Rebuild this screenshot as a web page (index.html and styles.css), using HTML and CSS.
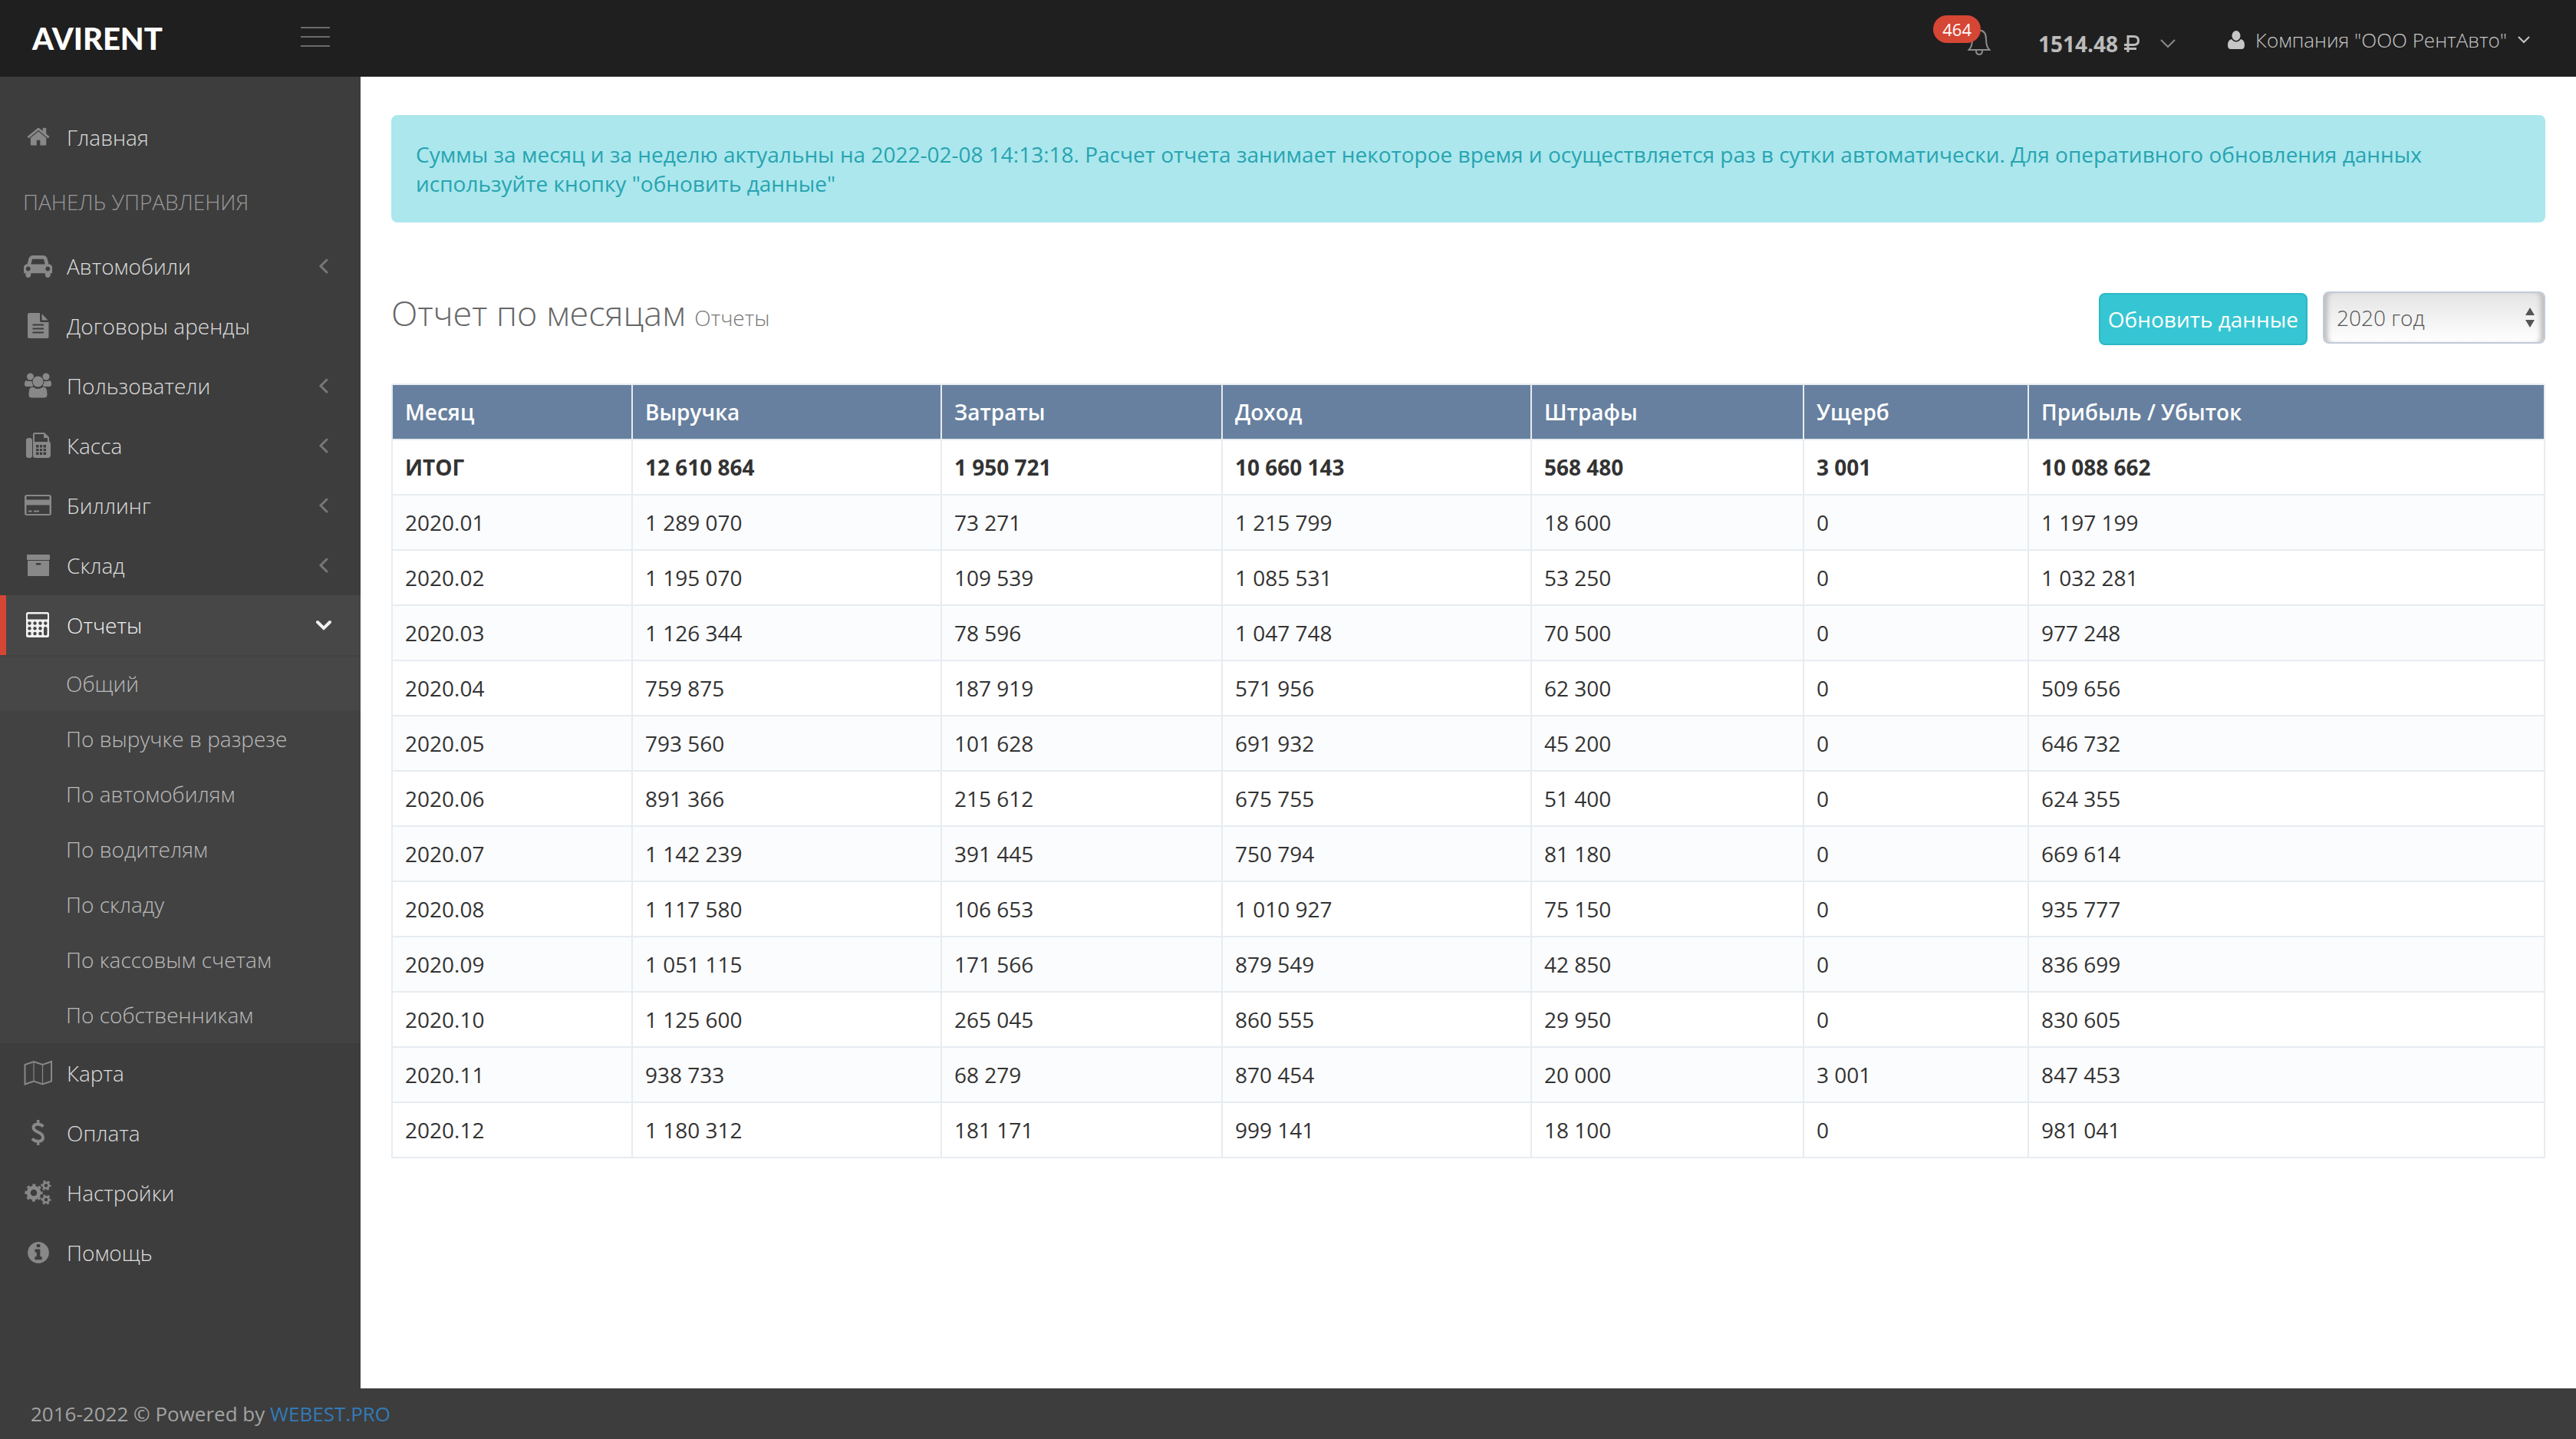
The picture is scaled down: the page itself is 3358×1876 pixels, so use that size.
FILE: index.html
```html
<!DOCTYPE html>
<html lang="ru">
<head>
<meta charset="utf-8">
<meta name="viewport" content="width=device-width, initial-scale=1">
<title>Отчет по месяцам</title>
<link rel="stylesheet" href="styles.css">
</head>
<body>
<header class="topbar">
  <div class="brand">
    <a class="logo" href="#">AVIRENT</a>
    <button class="toggler" type="button" aria-label="Меню"><span></span><span></span><span></span></button>
  </div>
  <div class="tools">
    <a class="bell" href="#" aria-label="Уведомления">
      <svg width="30" height="36" viewBox="0 0 30 36" fill="none" stroke="#8a8a8a" stroke-width="2"><path d="M1.500 28C5 25 6 21 6 14C6 6 9 2.500 15 2.500S24 6 24 14C24 21 25 25 28.500 28ZM11 29Q11 34 15 34T19 29"/></svg>
      <span class="badge">464</span>
    </a>
    <button class="balance" type="button">
      <b>1514.48</b>
      <svg class="rub" width="22" height="22" viewBox="0 0 22 22" fill="none" stroke="currentColor" stroke-width="3"><path d="M6 22V1.500H13.500Q19.500 1.500 19.500 7T13.500 12.500H1M1 17.500H17"/></svg>
      <svg class="arrow" width="20" height="12" viewBox="0 0 20 12" fill="none" stroke="#8a8a8a" stroke-width="2"><path d="M1 1L10 10L19 1"/></svg>
    </button>
    <button class="account" type="button">
      <svg width="22" height="24" viewBox="0 0 22 24" fill="currentColor"><ellipse cx="11" cy="6.500" rx="5.500" ry="6.500"/><path d="M5 11Q0 12 0 19Q0 24 4 24H18Q22 24 22 19Q22 12 17 11Q14.500 14.500 11 14.500T5 11Z"/></svg>
      <span>Компания "ООО РентАвто"</span>
      <svg width="16" height="10" viewBox="0 0 16 10" fill="none" stroke="currentColor" stroke-width="2"><path d="M1 1L8 8L15 1"/></svg>
    </button>
  </div>
</header>

<div class="shell">
  <nav class="sidebar">
    <ul class="menu">
      <li><a class="item" href="#">
        <svg class="ico" viewBox="0 0 38 38"><path transform="translate(4.200 2.300) scale(.0177)" d="M1472 992v480q0 26-19 45t-45 19h-384v-384h-256v384h-384q-26 0-45-19t-19-45v-480q0-1 .5-3t.5-3l575-474 575 474q1 2 1 6zm223-69l-62 74q-8 9-21 11h-3q-13 0-21-7l-692-577-692 577q-12 8-24 7-13-2-21-11l-62-74q-8-10-7-23.500t11-21.500l719-599q32-26 76-26t76 26l244 204v-195q0-14 9-23t23-9h192q14 0 23 9t9 23v408l219 182q10 8 11 21.500t-7 23.500z"/></svg>
        <span>Главная</span></a></li>
      <li class="heading">ПАНЕЛЬ УПРАВЛЕНИЯ</li>
      <li><a class="item" href="#">
        <svg class="ico" viewBox="0 0 38 38"><path transform="translate(1 2.700) scale(.0181)" d="M480 1088q0-66-47-113t-113-47-113 47-47 113 47 113 113 47 113-47 47-113zm36-320h1016l-89-357q-2-8-14-17.500t-21-9.500h-768q-9 0-21 9.500t-14 17.500zm1372 320q0-66-47-113t-113-47-113 47-47 113 47 113 113 47 113-47 47-113zm160-96v384q0 14-9 23t-23 9h-96v128q0 80-56 136t-136 56-136-56-56-136v-128h-1024v128q0 80-56 136t-136 56-136-56-56-136v-128h-96q-14 0-23-9t-9-23v-384q0-93 65.500-158.500t158.500-65.500h28l105-419q23-94 104-157.500t179-63.500h768q98 0 179 63.500t104 157.500l105 419h28q93 0 158.500 65.500t65.500 158.500z"/></svg>
        <span>Автомобили</span><svg class="chev" viewBox="0 0 20 20"><path d="M14 2L6 10L14 18"/></svg></a></li>
      <li><a class="item" href="#">
        <svg class="ico" viewBox="0 0 38 38"><path fill-rule="evenodd" d="M8 2H22V12Q22 14 24 14H33.500V33Q33.500 35 31.500 35H8Q6 35 6 33V4Q6 2 8 2ZM12.500 16.500V18.500H27V16.500ZM12.500 21.500V23.500H27V21.500ZM12.500 26.500V28.500H27V26.500Z"/><path d="M24.500 3L32.500 11.500H24.500Z"/></svg>
        <span>Договоры аренды</span></a></li>
      <li><a class="item" href="#">
        <svg class="ico" viewBox="0 0 38 38"><circle cx="9.500" cy="7" r="4.500"/><circle cx="30" cy="7" r="4.500"/><path d="M4 12Q6 13 9.500 13H13V20H5Q2 20 2 17Q2 13 4 12ZM35 12Q33 13 30 13H26V20H34Q37 20 37 17Q37 13 35 12Z"/><g class="cutout"><path d="M13 20Q16 22.500 19.500 22.500T26 20Q32 20 32 29V31Q32 35 28 35H11Q7 35 7 31V29Q7 20 13 20Z"/><circle cx="19.500" cy="13.500" r="7.500"/></g></svg>
        <span>Пользователи</span><svg class="chev" viewBox="0 0 20 20"><path d="M14 2L6 10L14 18"/></svg></a></li>
      <li><a class="item" href="#">
        <svg class="ico" viewBox="0 0 38 38"><rect x="4" y="9" width="8" height="26" rx="3"/><path fill-rule="evenodd" d="M15 2H28L34 8V13Q36 14 36 17V31Q36 35 32 35H16Q13 35 13 32V4Q13 2 15 2ZM15 4V14H32V9H27V4ZM17 18V21.500H20.500V18ZM22 18V21.500H25V18ZM26.500 18V21.500H30V18ZM17 23V26H20.500V23ZM22 23V26H25V23ZM26.500 23V26H30V23ZM17 27.500V31H20.500V27.500ZM22 27.500V31H25V27.500ZM26.500 27.500V31H30V27.500Z"/></svg>
        <span>Касса</span><svg class="chev" viewBox="0 0 20 20"><path d="M14 2L6 10L14 18"/></svg></a></li>
      <li><a class="item" href="#">
        <svg class="ico" viewBox="0 0 38 38"><path fill-rule="evenodd" d="M5 5H34Q37 5 37 8V29Q37 32 34 32H5Q2 32 2 29V8Q2 5 5 5ZM5 7Q4.500 7 4.500 7.500V11.500H34.500V7.500Q34.500 7 34 7ZM4.500 18.500V29.500Q4.500 30 5 30H34Q34.500 30 34.500 29.500V18.500ZM7 25.500H11.500V27.500H7ZM14 25.500H21V27.500H14Z"/></svg>
        <span>Биллинг</span><svg class="chev" viewBox="0 0 20 20"><path d="M14 2L6 10L14 18"/></svg></a></li>
      <li><a class="item" href="#">
        <svg class="ico" viewBox="0 0 38 38"><rect x="5" y="5" width="30" height="7" rx="1"/><path fill-rule="evenodd" d="M6 13H34V32Q34 33 33 33H7Q6 33 6 32ZM18 16Q16.500 16 16.500 17.200T18 18.500H22Q23.500 18.500 23.500 17.200T22 16Z"/></svg>
        <span>Склад</span><svg class="chev" viewBox="0 0 20 20"><path d="M14 2L6 10L14 18"/></svg></a></li>
      <li><a class="item active" href="#">
        <svg class="ico" viewBox="0 0 38 38"><rect x="4" y="2" width="30" height="33" rx="2.500"/><g class="holes"><rect x="6" y="4.500" width="26" height="7" rx="1"/><circle cx="8.500" cy="16.500" r="2.200"/><circle cx="15.500" cy="16.500" r="2.200"/><circle cx="22.500" cy="16.500" r="2.200"/><circle cx="29.300" cy="16.500" r="2.200"/><circle cx="8.500" cy="23.300" r="2.200"/><circle cx="15.500" cy="23.300" r="2.200"/><circle cx="22.500" cy="23.300" r="2.200"/><circle cx="8.500" cy="30" r="2.200"/><circle cx="15.500" cy="30" r="2.200"/><circle cx="22.500" cy="30" r="2.200"/><rect x="27" y="21" width="4.500" height="11.500" rx="2.200"/></g></svg>
        <span>Отчеты</span><svg class="chev" viewBox="0 0 20 20"><path d="M2 6L10 14L18 6"/></svg></a>
        <ul class="submenu">
          <li><a class="current" href="#">Общий</a></li>
          <li><a href="#">По выручке в разрезе</a></li>
          <li><a href="#">По автомобилям</a></li>
          <li><a href="#">По водителям</a></li>
          <li><a href="#">По складу</a></li>
          <li><a href="#">По кассовым счетам</a></li>
          <li><a href="#">По собственникам</a></li>
        </ul></li>
      <li><a class="item" href="#">
        <svg class="ico line" viewBox="0 0 38 38"><path d="M2.500 8L14 4L25.500 8L37 4V29.500L25.500 33.500L14 29.500L2.500 33.500Z" stroke-width="2"/><path d="M14 4V29.500M25.500 8V33.500" stroke-width="1.200"/></svg>
        <span>Карта</span></a></li>
      <li><a class="item" href="#">
        <svg class="ico line" viewBox="0 0 38 38"><path d="M26.500 10.500Q23 7.500 19.500 7.500Q13.500 7.500 13.500 12Q13.500 15.500 19.500 17.800Q26 20.500 26 25Q26 30 19.500 30Q15 30 12 26.500" stroke-width="4"/><path d="M19.700 2V8M19.700 29V35" stroke-width="3.500"/></svg>
        <span>Оплата</span></a></li>
      <li><a class="item" href="#">
        <svg class="ico line" viewBox="0 0 38 38"><circle cx="14" cy="19" r="6.800" stroke-width="5"/><circle cx="14" cy="19" r="10.300" stroke-width="2.600" stroke-dasharray="4.045 4.045" stroke-dashoffset="2"/><circle cx="30" cy="9.500" r="3.600" stroke-width="2.600"/><circle cx="30" cy="9.500" r="5.700" stroke-width="2" stroke-dasharray="2.984 2.984" stroke-dashoffset="1.500"/><circle cx="30" cy="28" r="3.600" stroke-width="2.600"/><circle cx="30" cy="28" r="5.700" stroke-width="2" stroke-dasharray="2.984 2.984" stroke-dashoffset="1.500"/></svg>
        <span>Настройки</span></a></li>
      <li><a class="item" href="#">
        <svg class="ico" viewBox="0 0 38 38"><path transform="translate(3.800 2.800) scale(.0181)" d="M1152 1376v-160q0-14-9-23t-23-9h-96v-512q0-14-9-23t-23-9h-320q-14 0-23 9t-9 23v160q0 14 9 23t23 9h96v320h-96q-14 0-23 9t-9 23v160q0 14 9 23t23 9h448q14 0 23-9t9-23zm-128-896v-160q0-14-9-23t-23-9h-192q-14 0-23 9t-9 23v160q0 14 9 23t23 9h192q14 0 23-9t9-23zm640 416q0 209-103 385.500t-279.500 279.500-385.500 103-385.500-103-279.500-279.500-103-385.500 103-385.500 279.500-279.500 385.500-103 385.500 103 279.500 279.500 103 385.500z"/></svg>
        <span>Помощь</span></a></li>
    </ul>
  </nav>

  <main class="content">
    <div class="alert">Суммы за месяц и за неделю актуальны на 2022-02-08 14:13:18. Расчет отчета занимает некоторое время и осуществляется раз в сутки автоматически. Для оперативного обновления данных используйте кнопку "обновить данные"</div>
    <div class="page-head">
      <h1>Отчет по месяцам <small>Отчеты</small></h1>
      <div class="actions">
        <button class="refresh" type="button">Обновить данные</button>
        <div class="year">
          <select aria-label="Год"><option>2020 год</option><option>2021 год</option><option>2022 год</option></select>
          <svg width="14" height="26" viewBox="0 0 14 26" fill="#555"><path d="M7 0L13 10H1ZM1 16H13L7 26Z"/></svg>
        </div>
      </div>
    </div>
    <table class="report">
      <colgroup><col class="c-month"><col class="c-wide"><col class="c-cost"><col class="c-wide"><col class="c-fine"><col class="c-damage"><col></colgroup>
      <thead><tr><th>Месяц</th><th>Выручка</th><th>Затраты</th><th>Доход</th><th>Штрафы</th><th>Ущерб</th><th>Прибыль / Убыток</th></tr></thead>
      <tbody>
        <tr class="total"><td>ИТОГ</td><td>12 610 864</td><td>1 950 721</td><td>10 660 143</td><td>568 480</td><td>3 001</td><td>10 088 662</td></tr>
        <tr><td>2020.01</td><td>1 289 070</td><td>73 271</td><td>1 215 799</td><td>18 600</td><td>0</td><td>1 197 199</td></tr>
        <tr><td>2020.02</td><td>1 195 070</td><td>109 539</td><td>1 085 531</td><td>53 250</td><td>0</td><td>1 032 281</td></tr>
        <tr><td>2020.03</td><td>1 126 344</td><td>78 596</td><td>1 047 748</td><td>70 500</td><td>0</td><td>977 248</td></tr>
        <tr><td>2020.04</td><td>759 875</td><td>187 919</td><td>571 956</td><td>62 300</td><td>0</td><td>509 656</td></tr>
        <tr><td>2020.05</td><td>793 560</td><td>101 628</td><td>691 932</td><td>45 200</td><td>0</td><td>646 732</td></tr>
        <tr><td>2020.06</td><td>891 366</td><td>215 612</td><td>675 755</td><td>51 400</td><td>0</td><td>624 355</td></tr>
        <tr><td>2020.07</td><td>1 142 239</td><td>391 445</td><td>750 794</td><td>81 180</td><td>0</td><td>669 614</td></tr>
        <tr><td>2020.08</td><td>1 117 580</td><td>106 653</td><td>1 010 927</td><td>75 150</td><td>0</td><td>935 777</td></tr>
        <tr><td>2020.09</td><td>1 051 115</td><td>171 566</td><td>879 549</td><td>42 850</td><td>0</td><td>836 699</td></tr>
        <tr><td>2020.10</td><td>1 125 600</td><td>265 045</td><td>860 555</td><td>29 950</td><td>0</td><td>830 605</td></tr>
        <tr><td>2020.11</td><td>938 733</td><td>68 279</td><td>870 454</td><td>20 000</td><td>3 001</td><td>847 453</td></tr>
        <tr><td>2020.12</td><td>1 180 312</td><td>181 171</td><td>999 141</td><td>18 100</td><td>0</td><td>981 041</td></tr>
      </tbody>
    </table>
  </main>
</div>

<footer class="footer">2016-2022 © Powered by <a href="#">WEBEST.PRO</a></footer>
</body>
</html>
```
FILE: styles.css
```css
* { box-sizing: border-box; }

body {
  margin: 0;
  min-height: 100vh;
  display: flex;
  flex-direction: column;
  background: #3d3d3d;
  color: #333;
  font: 400 28px/40px "Open Sans", "Noto Sans", sans-serif;
}

a { text-decoration: none; color: inherit; }
ul { list-style: none; margin: 0; padding: 0; }
button { font: inherit; border: 0; background: none; padding: 0; cursor: pointer; }
svg { display: block; flex: none; }

/* Top bar */
.topbar {
  height: 100px;
  display: flex;
  justify-content: space-between;
  background: #1f1f1f;
  color: #c6c6c6;
}
.brand {
  width: 470px;
  padding: 0 40px 0 42px;
  display: flex;
  align-items: center;
  justify-content: space-between;
}
.logo {
  font: 900 40px/40px Lato, sans-serif;
  color: #fff;
}
.toggler {
  display: flex;
  flex-direction: column;
  gap: 10px;
  padding-bottom: 4px;
}
.toggler span { width: 38px; height: 2px; background: #6b6b6b; }
.tools { display: flex; padding-right: 60px; }
.bell { position: relative; padding: 37px 0 0; margin-right: 62px; }
.badge {
  position: absolute;
  right: 13px;
  top: 20px;
  padding: 0 12px;
  border-radius: 18px;
  background: #d64635;
  color: #fff;
  font-size: 22px;
  line-height: 36px;
}
.balance {
  display: flex;
  align-items: center;
  padding-top: 14px;
  color: #bbb;
  margin-right: 68px;
}
.rub { margin-left: 7px; }
.arrow { margin-left: 26px; }
.account {
  display: flex;
  align-items: center;
  gap: 14px;
  padding-top: 4px;
  color: #c6c6c6;
  font-size: 26px;
  font-weight: 300;
}

/* Shell */
.shell { flex: 1; display: flex; }
.sidebar { width: 470px; flex: none; padding-top: 40px; font-weight: 300; }
.item {
  height: 78px;
  padding: 0 38px 0 30px;
  display: flex;
  align-items: center;
  gap: 19px;
  color: #ddd;
}
.item span { flex: 1; }
.ico { width: 38px; height: 38px; fill: #888; }
.line { fill: none; stroke: #888; }
.cutout { stroke: #3d3d3d; stroke-width: 1; }
.chev {
  width: 20px;
  height: 20px;
  fill: none;
  stroke: #777;
  stroke-width: 3;
  stroke-linecap: round;
}
.heading { padding: 25px 30px; color: #999; }
.active {
  background: #474747;
  color: #f1f1f1;
  border-left: 8px solid #d64635;
  padding-left: 22px;
}
.active .ico { fill: #f1f1f1; }
.active .holes { fill: #474747; }
.active .chev { stroke: #f1f1f1; stroke-width: 4; }
.submenu { background: #424242; padding-top: 2px; }
.submenu li { padding-bottom: 2px; }
.submenu a { display: block; padding: 15px 0 15px 86px; color: #bbb; }
.submenu .current { background: #474747; }

/* Content */
.content { flex: 1; min-width: 0; padding: 50px 40px 60px; background: #fff; }
.alert {
  padding: 32px;
  border-radius: 8px;
  background: #abe7ed;
  color: #27a4b0;
  line-height: 38px;
}
.page-head {
  display: flex;
  justify-content: space-between;
  align-items: flex-start;
  margin: 90px 0 50px;
}
h1 { margin: 0; color: #666; font-size: 45px; font-weight: 300; line-height: 56px; }
h1 small { color: #777; font-size: 28px; }
.actions { height: 70px; display: flex; align-items: flex-start; gap: 20px; }
.refresh {
  align-self: flex-end;
  height: 68px;
  padding: 0 10px;
  border: 2px solid #2bb8c4;
  border-radius: 8px;
  background: #36c6d3;
  color: #fff;
}
.year { position: relative; width: 290px; }
.year select {
  appearance: none;
  display: block;
  width: 100%;
  height: 68px;
  padding: 0 16px;
  border: 2px solid #c2cad8;
  border-radius: 8px;
  background: linear-gradient(#e4e4e4, #fff);
  box-shadow: inset 8px 0 6px -4px #bbb, inset -8px 0 6px -4px #bbb;
  color: #555;
  font: inherit;
  font-weight: 300;
}
.year svg { position: absolute; right: 13px; top: 21px; pointer-events: none; }

/* Report */
.report { width: 100%; table-layout: fixed; border-collapse: collapse; }
.c-month { width: 313px; }
.c-wide { width: 403px; }
.c-cost { width: 366px; }
.c-fine { width: 355px; }
.c-damage { width: 293px; }
.report th, .report td {
  padding: 15px 16px;
  border: 2px solid #e7ecf1;
  text-align: left;
}
.report th { background: #67809f; color: #fff; font-weight: 600; }
.report tr:nth-child(even) { background: #fbfcfd; }
.report .total { font-weight: 700; }

/* Footer */
.footer { padding: 13px 40px; color: #a3a3a3; font-size: 26px; }
.footer a { color: #337ab7; }
```
